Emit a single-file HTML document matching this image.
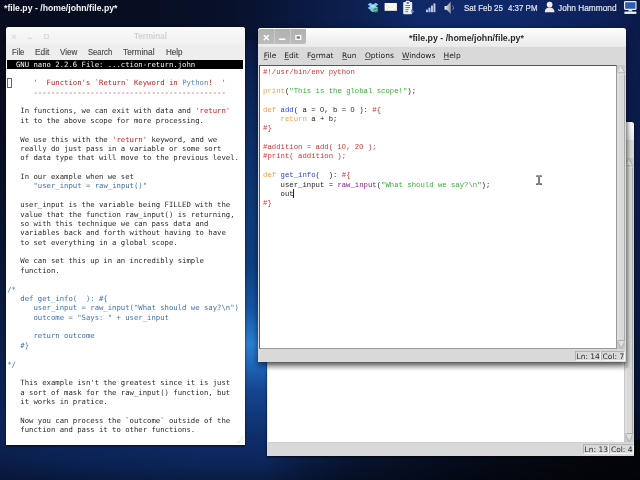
<!DOCTYPE html>
<html>
<head>
<meta charset="utf-8">
<title>desktop</title>
<style>
html,body{margin:0;padding:0;}
body{-webkit-font-smoothing:antialiased;width:640px;height:480px;overflow:hidden;position:relative;background:#0a1a40;font-family:"Liberation Sans","DejaVu Sans",sans-serif;}
#wall{position:absolute;left:0;top:0;width:640px;height:480px;background:#0a1a44;}
#w_top{position:absolute;left:0;top:0;width:640px;height:40px;background:linear-gradient(to right,#070d1f 0px,#070e22 140px,#08112a 230px,#0a1940 300px,#0c2152 360px,#0f2a6a 420px,#0f2868 520px,#0d215a 600px,#0a1a48 640px);}
#w_left{position:absolute;left:0;top:20px;width:10px;height:460px;background:linear-gradient(to bottom,#060b1a 0px,#070e22 120px,#091634 230px,#0b1f4a 330px,#0c2556 400px,#0c2454 440px,#0a2050 460px);}
#w_mid{position:absolute;left:240px;top:24px;width:30px;height:456px;background:linear-gradient(to bottom,#09153a 0px,#0c2658 70px,#0e3470 150px,#0e3c7c 200px,#0e3f80 240px,#1656a4 285px,#2a7ed0 320px,#1f68bc 340px,#154690 365px,#11377a 392px,#0e2c68 416px,#0e2c68 456px);}
#w_bot{position:absolute;left:0;top:440px;width:640px;height:40px;background:linear-gradient(to bottom,rgba(0,0,0,0) 0px,rgba(0,0,0,0.12) 20px,rgba(0,0,0,0.35) 40px),linear-gradient(to right,#0b2254 0px,#0c2860 90px,#0e2c68 200px,#0e2c68 262px,#0a1e4a 310px,#081634 360px,#060e22 440px,#04070f 560px,#030509 640px);}
#w_right{position:absolute;left:620px;top:24px;width:20px;height:432px;background:linear-gradient(to bottom,#0b1c4a 0px,#0b1b48 200px,#0a1840 300px,#081230 380px,#050a1a 432px);}
.abs{position:absolute;}
#root{position:absolute;left:0;top:0;width:640px;height:480px;overflow:hidden;will-change:transform;filter:blur(0.35px);}
/* top panel */
#panel{position:absolute;left:0;top:0;width:640px;height:27px;color:#fff;}
.sx{display:inline-block;transform-origin:0 50%;white-space:pre;}
#ptitle{position:absolute;left:4.3px;top:3px;font:bold 8.8px "Liberation Sans",sans-serif;color:#f4f4f4;white-space:nowrap;transform:scaleX(0.988);transform-origin:0 50%;}
.ptxt{-webkit-text-stroke:0.2px #dfe3ef;position:absolute;top:3px;font:8.8px "Liberation Sans",sans-serif;color:#dfe3ef;white-space:pre;transform-origin:0 50%;}

/* terminal */
#term{position:absolute;left:6px;top:27px;width:238.5px;height:418.3px;box-shadow:0 0.5px 2.5px rgba(0,0,0,0.75);background:#fff;border-radius:3px 3px 0 0;overflow:hidden;}
#ttitle{position:absolute;left:0;top:0;width:100%;height:17px;background:linear-gradient(#fafafa,#f1f1f1);}
#ttitle span{position:absolute;left:128px;top:3.8px;font:bold 8.8px "Liberation Sans",sans-serif;color:#d2d2d2;transform:scaleX(0.916);transform-origin:0 50%;}
#tmenu{-webkit-text-stroke:0.15px #4a4a4a;position:absolute;left:0;top:17px;width:100%;height:16px;background:#eeeeee;font:8.2px "Liberation Sans",sans-serif;color:#4a4a4a;}
#tmenu span{position:absolute;top:3.6px;transform-origin:0 50%;}
#tbar{position:absolute;left:1px;top:33px;width:236px;height:8.6px;background:#000;}
#tbody{position:absolute;left:1.15px;top:32.6px;margin:0;font:7.27px/9.375px "DejaVu Sans Mono","Liberation Mono",monospace;color:#2a2a2a;white-space:pre;}
#tbody .h{color:#f2f2f2;}
#tbody .r{color:#c41a1a;}
#tbody .b{color:#4171b0;}
#tbody .p{color:#5a86c0;}
#tcur{position:absolute;left:0.6px;top:51.3px;width:5.2px;height:9.4px;border:0.8px solid #666;box-sizing:border-box;}

/* idle windows */
.idle{position:absolute;background:#d9d9d9;border-radius:3px 3px 0 0;overflow:hidden;}
.ititle{position:absolute;left:0;top:0;width:100%;height:18.5px;background:linear-gradient(#fdfdfd 0%,#f4f4f4 50%,#eaeaea 100%);}
.ititle .tt{position:absolute;left:151.5px;top:4.6px;font:bold 8.8px "Liberation Sans",sans-serif;color:#2c2c2c;white-space:pre;}
.ibtns{position:absolute;left:0.5px;top:0.5px;width:47.5px;height:15.5px;background:linear-gradient(#b0b0b0,#bcbcbc);border-radius:3px 0 2px 0;}
.imenu{position:absolute;left:0;top:18.5px;width:100%;height:18px;background:#d9d9d9;font:7.5px "DejaVu Sans","Liberation Sans",sans-serif;color:#1c1c1c;}
.imenu span{position:absolute;top:4.3px;}
.imenu u{text-decoration-thickness:0.5px;text-underline-offset:0.9px;text-decoration-color:#6a6a6a;}
.itext{position:absolute;background:#fff;border:0.8px solid #555;border-right-color:#999;border-bottom-color:#999;box-sizing:border-box;}
.icode{position:absolute;left:3.6px;top:2.6px;margin:0;font:7.29px/9.375px "Liberation Mono","DejaVu Sans Mono",monospace;color:#222;white-space:pre;}
.icode .z{font-family:"Liberation Sans",sans-serif;line-height:0;letter-spacing:0.321px;}
.icode .c{color:#de2f2f;}
.icode .k{color:#f0a04a;}
.icode .s{color:#3aad3a;}
.icode .d{color:#2c3ce0;}
.icode .u{color:#8a1a8a;}
.iscroll{position:absolute;background:#e2e2e2;}
.istat{position:absolute;left:0;width:100%;height:13px;background:#d9d9d9;font:7.5px "DejaVu Sans","Liberation Sans",sans-serif;color:#2a2a2a;}
.istat span{position:absolute;top:1.6px;height:10px;border:0.6px solid #b4b4b4;border-right-color:#f6f6f6;border-bottom-color:#f6f6f6;box-sizing:border-box;white-space:pre;line-height:9.5px;padding-left:0.5px;}
</style>
</head>
<body>
<div id="root">
<div id="wall"><div id="w_left"></div><div id="w_mid"></div><div id="w_right"></div><div id="w_bot"></div><div id="w_top"></div></div>

<!-- top panel -->
<div id="panel">
 <svg id="picons" class="abs" style="left:0;top:0" width="640" height="27" viewBox="0 0 640 27">
  <defs>
   <filter id="bl" x="-20%" y="-20%" width="140%" height="140%"><feGaussianBlur stdDeviation="0.35"/></filter>
   <linearGradient id="spk" x1="0" x2="1" y1="0" y2="0"><stop offset="0" stop-color="#f2f2f2"/><stop offset="1" stop-color="#8a8d98"/></linearGradient>
  </defs>
  <g filter="url(#bl)">
  <!-- dropbox -->
  <path d="M370.3 2.7 L373 4.5 L375.7 2.7 L378.4 4.6 L376 6.3 L378.4 8 L375.7 9.8 L375.7 10.6 L373 12.3 L370.3 10.6 L370.3 9.8 L367.6 8 L370 6.3 L367.6 4.6 Z" fill="#7cc6f2"/><path d="M370 6.3 L373 4.5 L376 6.3 L373 8.2 Z" fill="#a9dcfa"/>
  <circle cx="375.8" cy="10.2" r="2.3" fill="#2f9a55"/>
  <path d="M374.6 10.2 L375.5 11.1 L377 9.3" stroke="#d8f5e0" stroke-width="0.7" fill="none"/>
  <!-- mail -->
  <rect x="384.6" y="3" width="12.3" height="7.8" fill="#fbfbf6"/>
  <path d="M385.2 3.6 L390.75 8 L396.3 3.6 M385.2 10.2 L389.3 6.8 M396.3 10.2 L392.2 6.8" stroke="#efe2b4" stroke-width="0.6" fill="none"/>
  <!-- clipboard -->
  <rect x="403.2" y="2" width="9" height="12.2" rx="0.9" fill="#e6e9f2"/>
  <rect x="404.6" y="3.6" width="6.2" height="9.4" fill="#f6f7fa"/>
  <rect x="405.7" y="0.7" width="4" height="2.6" rx="0.7" fill="#f2f3f8"/>
  <rect x="406.6" y="2.2" width="2.2" height="1.5" fill="#3a4874"/>
  <path d="M405.4 5.5 H410 M405.4 7.6 H410 M405.4 9.7 H408.6 M405.4 11.7 H408.2" stroke="#4a5680" stroke-width="0.85"/>
  <path d="M410.6 9.4 L414.4 11.3 L411.6 13.4 Z" fill="#6a86c8"/>
  <!-- signal -->
  <rect x="426" y="9.6" width="1.9" height="2.6" fill="#c3cbe4"/>
  <rect x="428.5" y="7.7" width="1.9" height="4.5" fill="#c3cbe4"/>
  <rect x="431" y="5.6" width="1.9" height="6.6" fill="#c3cbe4"/>
  <rect x="433.5" y="3.4" width="1.9" height="8.8" fill="#c3cbe4"/>
  <!-- speaker -->
  <path d="M444.6 6 H446.8 L450.8 1.6 V14 L446.8 9.8 H444.6 Z" fill="url(#spk)"/>
  <path d="M452.6 5.6 Q454.4 7.8 452.6 10" stroke="#9098b4" stroke-width="0.8" fill="none"/>
  <!-- user -->
  <circle cx="549.6" cy="4.6" r="2.9" fill="#f3f1ea"/>
  <path d="M544.8 12.2 Q544.8 7.6 549.6 7.6 Q554.4 7.6 554.4 12.2 Z" fill="#ece9e0"/>
  <!-- display -->
  <rect x="624.6" y="1.6" width="11.4" height="7.8" rx="0.6" fill="#2d5cae" stroke="#eef0f5" stroke-width="1.1"/>
  <rect x="628.4" y="9.8" width="3.8" height="1.6" fill="#d8dbe6"/>
  <rect x="624.4" y="11.6" width="12" height="2.3" fill="#f2f2f2"/>
  </g>
 </svg>
 <div id="ptitle">*file.py - /home/john/file.py*</div>
 <div class="ptxt" style="left:463.9px;transform:scaleX(0.906)">Sat Feb 25</div>
 <div class="ptxt" style="left:508px;transform:scaleX(0.9)">4:37 PM</div>
 <div class="ptxt" style="left:557.5px;transform:scaleX(0.942)">John Hammond</div>
</div>

<!-- terminal window -->
<div id="term">
 <div id="ttitle"><svg class="abs" style="left:0;top:0" width="60" height="17" viewBox="0 0 60 17"><g stroke="#dcdcdc" stroke-width="1.1" fill="none"><path d="M6 7.6 L10 11.6 M10 7.6 L6 11.6"/><path d="M21.5 11.4 H26"/><rect x="38.4" y="7.6" width="4" height="3.8"/></g></svg><span>Terminal</span></div>
 <div id="tmenu"><span style="left:5.6px;transform:scaleX(0.94)">File</span><span style="left:28.7px;transform:scaleX(1.02)">Edit</span><span style="left:54px;transform:scaleX(0.98)">View</span><span style="left:81.75px;transform:scaleX(0.932)">Search</span><span style="left:116.5px;transform:scaleX(1.018)">Terminal</span><span style="left:159.5px;transform:scaleX(0.98)">Help</span></div>
 <div id="tbar"></div>
<pre id="tbody"><span class="h">  GNU nano 2.2.6 File: ...ction-return.john</span>

      <span class="r">'  Function's `Return` Keyword in </span><span class="p">Python</span><span class="r">!  '</span>
      <span class="r">--------------------------------------------</span>

   In functions, we can exit with data and <span class="r">'return'</span>
   it to the above scope for more processing.

   We use this with the <span class="r">'return'</span> keyword, and we
   really do just pass in a variable or some sort
   of data type that will move to the previous level.

   In our example when we set
      <span class="b">"user_input = raw_input()"</span>

   user_input is the variable being FILLED with the
   value that the function raw_input() is returning,
   so with this technique we can pass data and
   variables back and forth without having to have
   to set everything in a global scope.

   We can set this up in an incredibly simple
   function.

<span class="b">/*</span>
<span class="b">   def get_info(  ): #{</span>
<span class="b">      user_input = raw_input("What should we say?\n")</span>
<span class="b">      outcome = "Says: " + user_input</span>

<span class="b">      return outcome</span>
<span class="b">   #}</span>

<span class="b">*/</span>

   This example isn't the greatest since it is just
   a sort of mask for the raw_input() function, but
   it works in pratice.

   Now you can process the `outcome` outside of the
   function and pass it to other functions.</pre>
 <div id="tcur"></div>
 <svg class="abs" style="left:228.5px;top:408px" width="9" height="9" viewBox="0 0 9 9"><path d="M8.5 1 L1 8.5 M8.5 3.5 L3.5 8.5 M8.5 6 L6 8.5" stroke="#c6c9c0" stroke-width="0.9" stroke-dasharray="0.9 0.9"/></svg>
</div>

<!-- back idle window -->
<div class="idle" id="idle2" style="box-shadow:0 0.5px 2.5px rgba(0,0,0,0.7);left:266.5px;top:121.5px;width:367.5px;height:334.5px;">
 <div class="ititle"></div>
 <div class="imenu"></div>
 <div class="itext" style="left:0.6px;top:36.5px;width:358px;height:284.5px;border-color:#e4e4e4 #c8c8c8 #d0d0d0 #e8e8e8;"></div>
 <div class="iscroll" style="left:358.5px;top:36.5px;width:8.5px;height:284.5px;"><svg width="8.5" height="284.5" viewBox="0 0 8.5 284.5" style="position:absolute;left:0;top:0">
   <rect x="0" y="0" width="8.5" height="284.5" fill="#c8c8c8"/>
   <rect x="0.6" y="8.6" width="7.2" height="267.3" fill="#d9d9d9"/>
   <rect x="0.6" y="8.6" width="0.7" height="267.3" fill="#f4f4f4"/>
   <rect x="7.1" y="8.6" width="0.7" height="267.3" fill="#9a9a9a"/>
   <rect x="0.6" y="8.6" width="7.2" height="0.7" fill="#f4f4f4"/>
   <rect x="0.6" y="275.2" width="7.2" height="0.7" fill="#9a9a9a"/>
   <path d="M4.2 1 L7.7 7.8 H0.7 Z" fill="#e6e6e6" stroke="#8c8c8c" stroke-width="0.5"/>
   <path d="M4.2 1 L0.7 7.8" stroke="#fafafa" stroke-width="0.7"/>
   <path d="M4.2 283.5 L7.7 276.7 H0.7 Z" fill="#e0e0e0" stroke="#8c8c8c" stroke-width="0.5"/>
   <path d="M0.7 276.7 H7.7" stroke="#fafafa" stroke-width="0.7"/>
  </svg></div>
 <div class="abs" style="left:0;top:240.5px;width:359px;height:9px;background:linear-gradient(rgba(0,0,0,0.26),rgba(0,0,0,0.1) 45%,rgba(0,0,0,0));"></div>
 <div class="abs" style="left:359px;top:0;width:4px;height:246px;background:linear-gradient(to right,rgba(0,0,0,0.16),rgba(0,0,0,0));"></div>
 <div class="istat" style="top:321px;"><span style="left:316px;width:26.3px;padding-left:1.1px">Ln: 13</span><span style="left:342.5px;width:24.5px;padding-left:0.9px">Col: 4</span></div>
</div>

<!-- front idle window -->
<div class="idle" id="idle1" style="left:257.5px;top:28px;width:368px;height:334px;box-shadow:0 2.5px 6px rgba(0,0,0,0.62);">
 <div class="ititle"><div class="ibtns"><svg width="48" height="16" viewBox="0 0 48 16" style="position:absolute;left:0;top:0">
   <rect x="16.2" y="0" width="0.8" height="15.5" fill="#cfcfcf"/><rect x="32.2" y="0" width="0.8" height="15.5" fill="#cfcfcf"/>
   <path d="M6.2 6.6 L10.4 10.8 M10.4 6.6 L6.2 10.8" stroke="#fff" stroke-width="1.4" stroke-linecap="round"/>
   <path d="M21.6 10.3 H26.8" stroke="#fff" stroke-width="1.5" stroke-linecap="round"/>
   <rect x="38" y="6.7" width="4.6" height="3.6" fill="#6a6a6a" stroke="#fff" stroke-width="1.4"/>
  </svg></div><div class="tt">*file.py - /home/john/file.py*</div></div>
 <div class="imenu"><span style="left:6.2px"><u>F</u>ile</span><span style="left:26.7px"><u>E</u>dit</span><span style="left:49.5px">F<u>o</u>rmat</span><span style="left:84.6px"><u>R</u>un</span><span style="left:107.4px"><u>O</u>ptions</span><span style="left:144.4px"><u>W</u>indows</span><span style="left:186.1px"><u>H</u>elp</span></div>
 <div class="itext" style="left:1px;top:36.5px;width:358px;height:284.5px;">
<pre class="icode"><span class="c">#!/usr/bin/env python</span>

<span class="k">print</span>(<span class="s">"This is the global scope!"</span>);

<span class="k">def</span> <span class="d">add</span>( a = <span class="z">0</span>, b = <span class="z">0</span> ): <span class="c">#{</span>
    <span class="k">return</span> a + b;
<span class="c">#}</span>

<span class="c">#addition = add( 1<span class="z">0</span>, 2<span class="z">0</span> );</span>
<span class="c">#print( addition );</span>

<span class="k">def</span> <span class="d">get_info</span>(  ): <span class="c">#{</span>
    user_input = <span class="u">raw_input</span>(<span class="s">"What should we say?\n"</span>);
    out
<span class="c">#}</span></pre>
<div class="abs" style="left:33.9px;top:123.4px;width:1.1px;height:8.8px;background:#222;"></div>
 <svg class="abs" style="left:276.2px;top:109.4px" width="6.8" height="10.2" viewBox="0 0 8 12"><path d="M1.2 1.2 Q2.8 1.2 3.6 2 Q4.4 1.2 6 1.2 M3.6 2 V10 M1.2 10.8 Q2.8 10.8 3.6 10 Q4.4 10.8 6 10.8" stroke="#444" stroke-width="2.1" fill="none" stroke-linecap="round"/><path d="M1.4 1.3 Q2.9 1.3 3.6 2.1 Q4.3 1.3 5.8 1.3 M3.6 2.1 V9.9 M1.4 10.7 Q2.9 10.7 3.6 9.9 Q4.3 10.7 5.8 10.7" stroke="#f4f4f4" stroke-width="0.6" fill="none"/></svg>
 </div>
 <div class="iscroll" style="left:359px;top:36.5px;width:8.5px;height:284.5px;"><svg width="8.5" height="284.5" viewBox="0 0 8.5 284.5" style="position:absolute;left:0;top:0">
   <rect x="0" y="0" width="8.5" height="284.5" fill="#c8c8c8"/>
   <rect x="0.6" y="8.6" width="7.2" height="267.3" fill="#d9d9d9"/>
   <rect x="0.6" y="8.6" width="0.7" height="267.3" fill="#f4f4f4"/>
   <rect x="7.1" y="8.6" width="0.7" height="267.3" fill="#9a9a9a"/>
   <rect x="0.6" y="8.6" width="7.2" height="0.7" fill="#f4f4f4"/>
   <rect x="0.6" y="275.2" width="7.2" height="0.7" fill="#9a9a9a"/>
   <path d="M4.2 1 L7.7 7.8 H0.7 Z" fill="#e6e6e6" stroke="#8c8c8c" stroke-width="0.5"/>
   <path d="M4.2 1 L0.7 7.8" stroke="#fafafa" stroke-width="0.7"/>
   <path d="M4.2 283.5 L7.7 276.7 H0.7 Z" fill="#e0e0e0" stroke="#8c8c8c" stroke-width="0.5"/>
   <path d="M0.7 276.7 H7.7" stroke="#fafafa" stroke-width="0.7"/>
  </svg></div>
 <div class="istat" style="top:321px;"><span style="left:317.5px;width:26px;">Ln: 14</span><span style="left:343.5px;width:24px;padding-left:0.6px">Col: 7</span></div>
</div>

</div>
</body>
</html>
